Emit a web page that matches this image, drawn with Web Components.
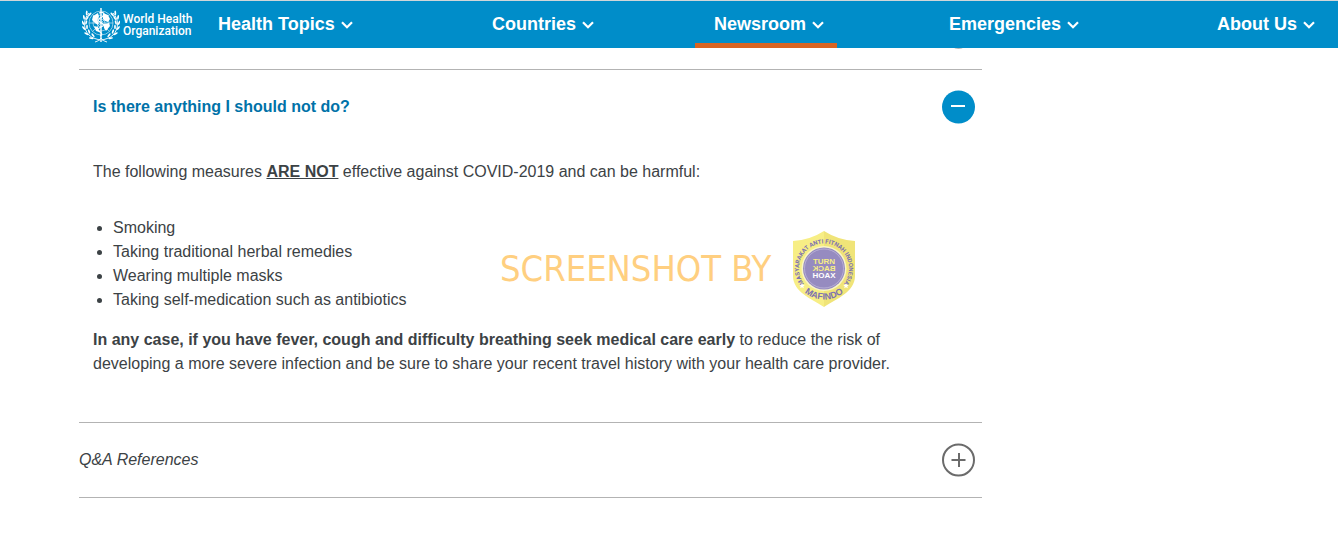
<!DOCTYPE html>
<html lang="en">
<head>
<meta charset="utf-8">
<title>Q&amp;A on coronaviruses</title>
<style>
body{margin:0;background:#fff;color:#3c4245;font:16px/24px "Liberation Sans",Arial,sans-serif}
p{margin:0 0 32px}
ul{margin:0 0 16px;padding-left:20px}
p:last-child{margin-bottom:0}
</style>
</head>
<body>
<site-header>
  <nav-item>Health Topics</nav-item>
  <nav-item>Countries</nav-item>
  <nav-item current>Newsroom</nav-item>
  <nav-item>Emergencies</nav-item>
  <nav-item>About Us</nav-item>
</site-header>
<qa-list>
  <qa-item label="Previous question"></qa-item>
  <qa-item open>
    <span slot="title">Is there anything I should not do?</span>
    <p>The following measures <strong><u>ARE NOT</u></strong> effective against COVID-2019 and can be harmful:</p>
    <ul>
      <li>Smoking</li>
      <li>Taking traditional herbal remedies</li>
      <li>Wearing multiple masks</li>
      <li>Taking self-medication such as antibiotics</li>
    </ul>
    <p><strong>In any case, if you have fever, cough and difficulty breathing seek medical care early</strong> to reduce the risk of developing a more severe infection and be sure to share your recent travel history with your health care provider.</p>
  </qa-item>
  <qa-item><em slot="title">Q&amp;A References</em></qa-item>
  <water-mark slot="overlay">SCREENSHOT BY</water-mark>
</qa-list>
<script>
function define(name, html, setup) {
  customElements.define(name, class extends HTMLElement {
    constructor() {
      super();
      this.attachShadow({mode: 'open'}).innerHTML = html;
    }
    connectedCallback() { if (setup) setup(this, this.shadowRoot); }
  });
}

define('who-logo', `
<style>
:host{display:block}
a{display:flex;align-items:center;gap:3px;color:#fff;text-decoration:none;font:500 12px/12px Roboto,"Open Sans",sans-serif;white-space:nowrap}
svg{display:block;flex:none}
</style>
<a href="#">
<svg width="38" height="36" viewBox="0 0 38 36" fill="none" stroke="#fff" aria-hidden="true">
  <g stroke-width=".6" opacity=".9">
    <circle cx="19" cy="16" r="12"/><circle cx="19" cy="16" r="8"/><circle cx="19" cy="16" r="4"/>
    <path d="M7 16h24M10.500 7.500l17 17M27.500 7.500l-17 17"/>
  </g>
  <path d="M11 9l5-3 1 4-2 3 2 3-1 2-3-2-3-3zM21 6l5 2 2 4-2 3-3-1-2-2zM22 17l5-1 1 3-4 5-2-3zM12 19l4 1 1 5-3-1z" fill="#fff" stroke="none"/>
  <path d="M7 6C1 12 1 22 7 28c3 3 7 4 11 5M31 6c6 6 6 16 0 22-3 3-7 4-11 5" stroke-width=".9"/>
  <g id="leaves" fill="#fff" stroke="none"></g>
  <path d="M19 1v34" stroke-width="1.400"/>
  <path d="M17 6c5-2 7 2 3 4s-6 3-2 5 5 3 1 5-4 3-1 5 2 3 0 4" stroke-width="1.100"/>
  <path d="M13 35c3-1 5-2 6-4 1 2 3 3 6 4" stroke-width=".9"/>
</svg>
<span>World Health<br>Organization</span>
</a>`, (el, root) => {
  const pts = [[6,7,25],[3.5,11,10],[2.5,16,-5],[3.5,21,-20],[6,26,-40],[10.500,30,-60]];
  root.getElementById('leaves').innerHTML = pts.map(([x, y, r]) =>
    [[x, r, 1], [38 - x, -r, -1]].map(([cx, a, s]) =>
      `<g transform="translate(${cx} ${y}) rotate(${a})"><ellipse cx="${-1.4 * s}" cy="-1" rx=".9" ry="2.400" transform="rotate(${-20 * s})"/><ellipse cx="${1.5 * s}" cy="-1" rx=".9" ry="2.300" transform="rotate(${20 * s})"/></g>`).join('')).join('');
});

define('site-header', `
<style>
:host{display:block;position:sticky;top:0;z-index:2;background:#008dc9;border-top:1px solid #d0d6d9}
header{display:grid;grid-template-columns:199fr 1139fr;height:47px}
who-logo{align-self:center;margin-left:82px}
nav{display:grid;grid-template-columns:274fr 222fr 235fr 268fr 140fr}
</style>
<header><who-logo></who-logo><nav aria-label="Main"><slot></slot></nav></header>`);

define('nav-item', `
<style>
:host{display:flex}
a{display:flex;align-items:center;gap:6px;box-sizing:border-box;padding:5px 13px 3px 19px;border-bottom:5px solid transparent;border-top:1px solid transparent;color:#fff;text-decoration:none;font:bold 18px/24px "Liberation Sans",Arial,sans-serif;white-space:nowrap}
:host([current]) a{border-bottom-color:#d86422}
svg{display:block;margin-top:2px}
</style>
<a href="#"><slot></slot><svg width="12" height="8" viewBox="0 0 12 8" fill="none" stroke="#fff" stroke-width="2.200" aria-hidden="true"><path d="M1 1.200l5 5 5-5"/></svg></a>`);

define('qa-list', `
<style>
:host{display:block}
main{position:relative;max-width:903px;margin:-53px 0 0 79px}
</style>
<main><slot></slot><slot name="overlay"></slot></main>`);

define('qa-item', `
<style>
:host{display:block;border-bottom:1px solid #b3b3b3}
h2{margin:0;font:inherit}
button{display:flex;justify-content:space-between;align-items:center;width:100%;height:74px;padding:0 7px 0 0;border:0;background:none;color:inherit;font:inherit;text-align:left;cursor:pointer}
:host([open]) button{padding-left:14px;font-weight:bold;color:#0072a8}
svg{display:block}
.body{display:none;padding:16px 80px 46px 14px}
:host([open]) .body,:host(:not([open])) .plus{display:block}
:host([open]) .plus,:host(:not([open])) .minus{display:none}
</style>
<h2><button type="button"><span><slot name="title"></slot></span>
<svg class="plus" width="33" height="34" viewBox="0 0 33 34" fill="none" stroke="#6b6b6b" stroke-width="2" aria-hidden="true"><circle cx="16.500" cy="17" r="15.500"/><path d="M9.500 17h14M17 10v14"/></svg>
<svg class="minus" width="33" height="34" viewBox="0 0 33 34" aria-hidden="true"><circle cx="16.500" cy="17" r="16.500" fill="#008dc9"/><path d="M9 16h14" stroke="#fff" stroke-width="2"/></svg>
</button></h2>
<div class="body"><slot></slot></div>`, (el, root) => {
  const b = root.querySelector('button');
  const sync = () => b.setAttribute('aria-expanded', el.hasAttribute('open'));
  if (el.hasAttribute('label')) b.setAttribute('aria-label', el.getAttribute('label'));
  b.onclick = () => { el.toggleAttribute('open'); sync(); };
  sync();
});

define('water-mark', `
<style>
:host{position:absolute;left:421px;top:235px;display:flex;align-items:center;gap:21px;color:#ffcf80;font:36px/40px "DejaVu Sans Condensed","Noto Sans",sans-serif;white-space:nowrap;pointer-events:none}
svg{display:block}
text{font-family:"Liberation Sans",Arial,sans-serif;font-weight:bold}
.ring{font-family:Roboto,sans-serif}
</style>
<span><slot></slot></span>
<svg width="64" height="78" viewBox="0 0 64 78">
  <defs>
    <path id="top" d="M12.300 53.900A25 25 0 1 1 51.700 53.900"/>
    <path id="bottom" d="M1 38.500A31 31 0 0 0 63 38.500"/>
  </defs>
  <path d="M32 1Q46 10 63 11V46C63 62 44 69 32 77Z" fill="#f0e478"/>
  <path d="M32 1Q18 10 1 11V46C1 62 20 69 32 77Z" fill="#f7ee85"/>
  <circle cx="32" cy="38.500" r="22.500" fill="#f9f5c8"/>
  <circle cx="32" cy="38.500" r="21" fill="#968bc0"/>
  <circle cx="32" cy="38.500" r="19.500" fill="none" stroke="#c3bcdc" stroke-width=".7"/>
  <g text-anchor="middle" font-size="8">
    <text x="32" y="34" fill="#f7ee85">TURN</text>
    <text x="-32" y="41" fill="#f7ee85" transform="scale(-1 1)">BACK</text>
    <text x="32" y="48" fill="#fff">HOAX</text>
  </g>
  <g fill="#7d72b0" text-anchor="middle">
    <text class="ring" font-size="6"><textPath href="#top" startOffset="50%">MASYARAKAT ANTI FITNAH INDONESIA</textPath></text>
    <text font-size="9"><textPath href="#bottom" startOffset="50%">MAFINDO</textPath></text>
  </g>
  <path d="M10 53l.8 1.800 2 .2-1.500 1.300.5 2-1.800-1-1.800 1 .5-2-1.500-1.300 2-.2zM54 53l.8 1.800 2 .2-1.500 1.300.5 2-1.800-1-1.800 1 .5-2-1.500-1.300 2-.2z" fill="#fff"/>
</svg>`);
</script>
</body>
</html>
